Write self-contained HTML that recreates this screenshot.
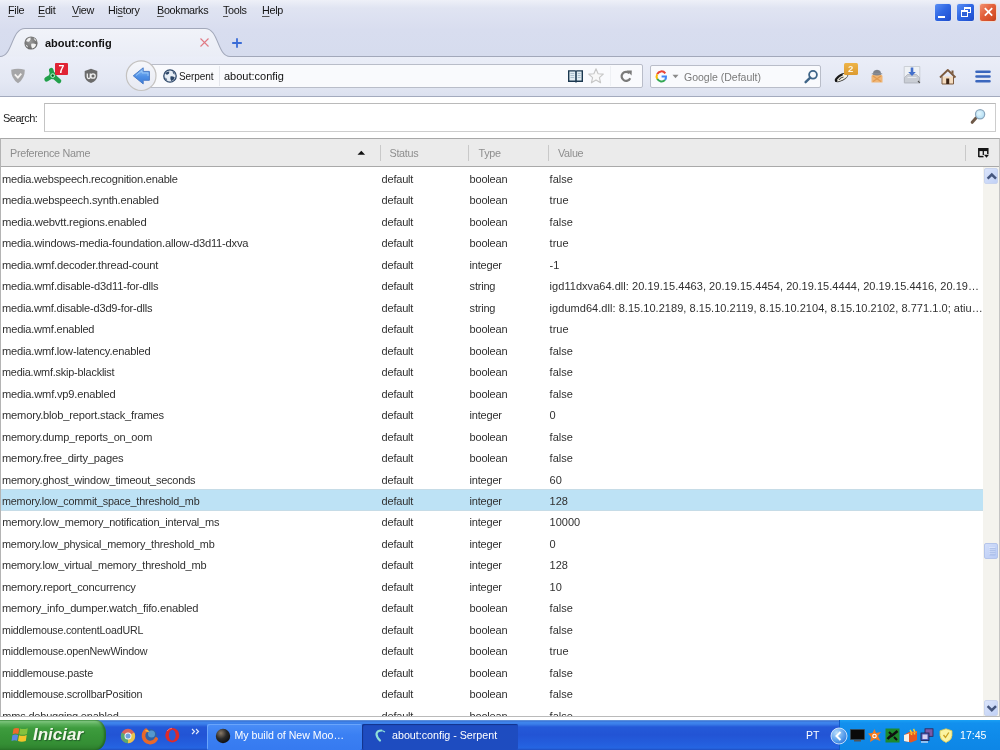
<!DOCTYPE html>
<html><head><meta charset="utf-8">
<style>
*{margin:0;padding:0;box-sizing:border-box}
html,body{width:1000px;height:750px;overflow:hidden;background:#fff;font-family:"Liberation Sans",sans-serif}
.abs{position:absolute}
svg{position:absolute;overflow:visible}
#chrome{position:absolute;left:0;top:0;width:1000px;height:97px;background:linear-gradient(#eef0f8 0,#e0e4f2 8px,#d8ddef 30px,#d6dcee 56px)}
.menu{position:absolute;top:3.7px;font-size:10.8px;letter-spacing:-0.3px;color:#141414;white-space:nowrap}
.menu u{text-decoration:underline;text-decoration-color:#555;text-underline-offset:1.5px}
#nav{position:absolute;left:0;top:56px;width:1000px;height:41px;background:linear-gradient(#ebeef8,#e4e8f4 25px,#dce1ef);border-bottom:1px solid #a3aabd}
#url{position:absolute;left:140px;top:64px;width:503px;height:24px;border:1px solid #b9bdc9;border-radius:2px;background:#f9fafd}
#srch{position:absolute;left:650px;top:65px;width:171px;height:23px;border:1px solid #b9bdc9;border-radius:2px;background:#f9fafd}
#tree{position:absolute;left:0;top:138px;width:1000px;height:579px;border:1px solid #a8a8a8;border-left-color:#b4b4b4;border-right-color:#c4c4c4;border-bottom-color:#bababa;background:#fff;overflow:hidden}
#hdr{position:absolute;left:0;top:0;width:998px;height:28px;background:#ebebeb;border-bottom:1px solid #a9a9a9}
.htxt{position:absolute;top:8px;font-size:10.8px;letter-spacing:-0.3px;color:#8e8e8e;white-space:nowrap}
.hsep{position:absolute;top:6px;width:1px;height:16px;background:#c9c9c9}
#body{position:absolute;left:0;top:28px;width:983px;height:549px;overflow:hidden}
.row{position:absolute;left:0;width:983px;height:21.48px;font-size:11px;letter-spacing:-0.2px;color:#303030;white-space:nowrap}
.row span{position:absolute;top:5.8px}
.row.sel{background:#bde2f5;box-shadow:inset 0 1px 0 #c6dce7,inset 0 -1px 0 #c6dce7}
.c1{left:1.3px;transform-origin:0 0}.c2{left:380.6px}.c3{left:468.6px}.c4{left:548.6px;letter-spacing:0}
#sb{position:absolute;left:982px;top:28px;width:16px;height:549px;background:#f4f3ee}
.sbb{position:absolute;left:1px;width:14px;height:16px;border-radius:2px;background:linear-gradient(135deg,#dbe5fb,#c1d1f6);border:1px solid #c9d4ee}
#task{position:absolute;left:0;top:720.3px;width:1000px;height:29.7px;background:linear-gradient(#7aaee8 0,#3a6ccc 1px,#3f86ec 2px,#3b7fea 4px,#2459d8 7px,#2254d5 15px,#2460df 25px,#2565e2 28px,#1f4fc2 30px)}
</style></head><body>
<div id="root" style="position:absolute;left:0;top:0;width:1000px;height:750px;will-change:transform">
<div id="chrome">
 <div class="menu" style="left:8px"><u>F</u>ile</div>
 <div class="menu" style="left:38px"><u>E</u>dit</div>
 <div class="menu" style="left:72px"><u>V</u>iew</div>
 <div class="menu" style="left:108px">Hi<u>s</u>tory</div>
 <div class="menu" style="left:157px"><u>B</u>ookmarks</div>
 <div class="menu" style="left:223px"><u>T</u>ools</div>
 <div class="menu" style="left:262px"><u>H</u>elp</div>
 <!-- window controls -->
 <div class="abs" style="left:934px;top:3px;width:18px;height:18.5px;border-radius:3px;background:linear-gradient(135deg,#5a8ef4,#3068e4 45%,#2456d6 80%,#1f4bc4);border:1px solid #dfe6f6"><div class="abs" style="left:3px;top:11.5px;width:6.5px;height:2.3px;background:#fff"></div></div>
 <div class="abs" style="left:956px;top:3px;width:18.5px;height:18.5px;border-radius:3px;background:linear-gradient(135deg,#5a8ef4,#3068e4 45%,#2456d6 80%,#1f4bc4);border:1px solid #dfe6f6"><div class="abs" style="left:6.5px;top:3px;width:7px;height:6px;border:1.3px solid #fff;border-top-width:2px"></div><div class="abs" style="left:3.5px;top:6px;width:7px;height:7px;border:1.3px solid #fff;border-top-width:2px;background:#2f62d8"></div></div>
 <div class="abs" style="left:978.5px;top:3px;width:18.5px;height:18.5px;border-radius:3px;background:linear-gradient(135deg,#f29070,#e2603a 45%,#d44d26 80%,#c03e1c);border:1px solid #efdcd4"><svg width="19" height="18" style="left:-1px;top:-1px"><path d="M5.8 5.2 L13.2 12.6 M13.2 5.2 L5.8 12.6" stroke="#fff" stroke-width="1.7"/></svg></div>
</div>
<div id="nav"></div>
<div id="url"></div>
<div id="srch"></div>
<div id="tabs">
 <svg width="1000" height="32" style="left:0;top:26px">
  <defs><linearGradient id="tg" x1="0" y1="0" x2="0" y2="1"><stop offset="0" stop-color="#f1f3f9"/><stop offset="1" stop-color="#eaedf6"/></linearGradient></defs>
  <path d="M0,30.5 C13,30.5 11,2.5 25,2.5 L205,2.5 C219,2.5 217,30.5 230,30.5 Z" fill="url(#tg)"/>
  <path d="M-1,30.5 H0 C13,30.5 11,2.5 25,2.5 L205,2.5 C219,2.5 217,30.5 230,30.5 H1001" fill="none" stroke="#a2a8ba" stroke-width="1.1"/>
 </svg>
 <svg width="14" height="14" style="left:24px;top:36px"><defs><radialGradient id="gl" cx="0.45" cy="0.4" r="0.7"><stop offset="0" stop-color="#9a9a9a"/><stop offset="1" stop-color="#5e5e5e"/></radialGradient></defs><circle cx="7" cy="7" r="6.6" fill="url(#gl)"/><path d="M2 5 Q3.5 1.8 6.5 1.5 Q7.2 3.5 5.5 5.2 Q4 6.5 2 5Z M7.2 7.8 Q10 7 12.2 8.5 Q11.2 12 8 12.6 Q6.8 10 7.2 7.8Z M9.5 1.8 Q12 3 12.6 5.6 Q10.5 5.2 9.5 1.8Z M1.6 8.5 Q3.5 9 4.2 11.5 Q2.3 10.8 1.6 8.5Z" fill="#f2f2f2"/></svg>
 <div class="abs" style="left:45px;top:36.5px;font-size:11px;font-weight:bold;color:#111;white-space:nowrap">about:config</div>
 <svg width="12" height="12" style="left:199px;top:37px"><path d="M1.5 1.5 L9.5 9.5 M9.5 1.5 L1.5 9.5" stroke="#e07a84" stroke-width="1.1"/></svg>
 <svg width="12" height="12" style="left:231px;top:37px"><path d="M6 1.2 V10.8 M1.2 6 H10.8" stroke="#3a6cd6" stroke-width="1.8"/></svg>
</div>
<div id="navicons">
 <!-- gray shield -->
 <svg width="16" height="17" style="left:10px;top:68px"><path d="M1.2 1.8 Q8 -0.3 14.8 1.8 Q15 10.5 8 15.3 Q1 10.5 1.2 1.8 Z" fill="#a6a6a8"/><path d="M4.8 6.3 L7.9 9.6 L11.3 5.6" fill="none" stroke="#f4f2f0" stroke-width="1.8"/></svg>
 <!-- green tri-lobe -->
 <svg width="18" height="18" style="left:44px;top:67px"><path d="M8.7 8.6 L7.2 3.2 M8.7 8.6 L2.6 12.3 M8.7 8.6 L15 14" stroke="#21a04a" stroke-width="4.6" stroke-linecap="round"/><circle cx="8.7" cy="8.6" r="3.6" fill="#21a04a"/><circle cx="8.7" cy="8.6" r="1.9" fill="none" stroke="#c8f5d4" stroke-width="0.9"/><circle cx="8.7" cy="8.6" r="0.9" fill="#0c4f20"/></svg>
 <div class="abs" style="left:55px;top:63px;width:13px;height:12px;background:#e02334;border-radius:1px;color:#fff;font:bold 10.5px 'Liberation Sans';text-align:center;line-height:12px">7</div>
 <!-- ublock -->
 <svg width="16" height="16" style="left:83px;top:68px"><path d="M8 0.8 L14.3 3 V8 Q14.3 12.5 8 15 Q1.7 12.5 1.7 8 V3 Z" fill="#6b6b6b"/><path d="M4.3 5.5 V9 Q4.3 10.5 5.8 10.5 Q7.3 10.5 7.3 9 V5.5" fill="none" stroke="#f0f0f0" stroke-width="1.3"/><circle cx="10" cy="8" r="2.2" fill="none" stroke="#f0f0f0" stroke-width="1.3"/></svg>
 <!-- back button -->
 <svg width="34" height="34" style="left:124px;top:59px"><defs><linearGradient id="bb" x1="0" y1="0" x2="0" y2="1"><stop offset="0" stop-color="#f6f7fb"/><stop offset="1" stop-color="#e6e9f2"/></linearGradient><linearGradient id="ba" x1="0" y1="0" x2="0" y2="1"><stop offset="0" stop-color="#8fc2f8"/><stop offset="0.55" stop-color="#4f90e6"/><stop offset="1" stop-color="#3a7ad8"/></linearGradient></defs>
  <circle cx="17.2" cy="16.7" r="14.8" fill="url(#bb)" stroke="#c4c2c0" stroke-width="1.2"/>
  <path d="M9.3 16.8 L19.2 8.8 V12.4 H25.4 V21.3 H19.2 V24.9 Z" fill="url(#ba)" stroke="#4a7cc8" stroke-width="1" stroke-linejoin="round"/><path d="M12 16.5 L18 11.8 V14 H24 V17" fill="none" stroke="#b9dcfb" stroke-width="0.8" opacity="0.7"/></svg>
</div>

<div id="urlc">
 <svg width="14" height="14" style="left:163px;top:69px"><circle cx="7" cy="7" r="6.2" fill="#e6edf5" stroke="#2c4668" stroke-width="1.3"/><path d="M2.2 4.2 Q4 2.2 6.3 2.4 Q6.6 4.6 4.6 5.6 Q3 6 2.2 4.2Z M7.4 7.4 Q9.8 7 11.8 8.6 Q11 11.6 8.2 12 Q7 9.8 7.4 7.4Z M9.2 2.2 Q11.4 3.2 12 5.4 Q10.2 5.2 9.2 2.2Z M2 8.6 Q3.8 9.2 4.4 11.6 Q2.6 10.8 2 8.6Z" fill="#2c4668"/></svg>
 <div class="abs" style="left:179px;top:70.5px;font-size:10px;letter-spacing:-0.1px;color:#1a1a1a;white-space:nowrap">Serpent</div>
 <div class="abs" style="left:219px;top:66px;width:1px;height:20px;background:#e4e6ec"></div>
 <div class="abs" style="left:224px;top:70px;font-size:11px;color:#111;white-space:nowrap">about:config</div>
 <!-- reader book -->
 <svg width="18" height="16" style="left:567px;top:68px"><path d="M1 2.2 H8.5 L9 2.8 L9.5 2.2 H16 V14 H10 L9 14.8 L8 14 H1 Z" fill="#1b3850"/><path d="M2.4 3.4 H8.2 V12.4 H2.4 Z M9.8 3.4 H14.6 V12.4 H9.8 Z" fill="#e2edf3"/><path d="M3.4 5.5 H7.2 M3.4 7.5 H7.2 M3.4 9.5 H7.2 M10.8 5.5 H13.6 M10.8 7.5 H13.6 M10.8 9.5 H13.6" stroke="#9db4c4" stroke-width="0.8"/></svg>
 <!-- star -->
 <svg width="18" height="18" style="left:587px;top:67px"><path d="M9 1.8 L11.1 6.7 L16.3 7.1 L12.4 10.6 L13.6 15.8 L9 13 L4.4 15.8 L5.6 10.6 L1.7 7.1 L6.9 6.7 Z" fill="#f8f8f8" stroke="#c6c6c6" stroke-width="1.1" stroke-linejoin="round"/></svg>
 <div class="abs" style="left:610px;top:66px;width:1px;height:20px;background:#eef0f4"></div>
 <!-- reload -->
 <svg width="14" height="14" style="left:619px;top:69px"><path d="M10.4 4.2 A4.5 4.5 0 1 0 11.2 9.2" fill="none" stroke="#7a7a7a" stroke-width="2.2"/><path d="M7.6 1.6 L12.8 1.4 L12.6 6.6 Z" fill="#7a7a7a"/></svg>
 <!-- google G -->
 <svg width="13" height="13" style="left:654.5px;top:69.5px"><path d="M10.3 3.3 A4.7 4.7 0 0 0 2.2 4.2" fill="none" stroke="#ea4335" stroke-width="2"/><path d="M2.2 4.2 A4.7 4.7 0 0 0 2.3 8.9" fill="none" stroke="#fbbc05" stroke-width="2"/><path d="M2.3 8.9 A4.7 4.7 0 0 0 10 9.9" fill="none" stroke="#34a853" stroke-width="2"/><path d="M10 9.9 A4.7 4.7 0 0 0 11 6.4 H6.6" fill="none" stroke="#4285f4" stroke-width="2"/></svg>
 <svg width="8" height="6" style="left:671.5px;top:74px"><path d="M0.5 0.8 H6.5 L3.5 4.2 Z" fill="#8a8a8a"/></svg>
 <div class="abs" style="left:684px;top:70.5px;font-size:10.5px;color:#7a7a7a;white-space:nowrap">Google (Default)</div>
 <!-- magnifier -->
 <svg width="15" height="15" style="left:804px;top:69px"><circle cx="9" cy="5.8" r="3.9" fill="none" stroke="#3f6588" stroke-width="1.8"/><path d="M6.2 8.6 L1.6 13.2" stroke="#3f6588" stroke-width="2.4" stroke-linecap="round"/></svg>
</div>
<div id="navright">
 <!-- pen -->
 <svg width="18" height="16" style="left:833px;top:68px"><g transform="rotate(-28 8.5 9.5)"><ellipse cx="8.5" cy="9.5" rx="7" ry="3" fill="#f3f0e4" stroke="#3a3a3a" stroke-width="0.9"/><path d="M2 9 Q6 6.5 11 7.2" stroke="#1a1a1a" stroke-width="1.8" fill="none"/><path d="M5 10.5 Q8 9 10.5 10" stroke="#444" stroke-width="1" fill="none"/><circle cx="2.3" cy="9.8" r="1.3" fill="#111"/></g></svg>
 <div class="abs" style="left:844px;top:63px;width:13.5px;height:12px;background:linear-gradient(#eeb448,#dc9a30);border-radius:1.5px;color:#fdf4e0;font:bold 9.5px 'Liberation Sans';text-align:center;line-height:12px">2</div>
 <!-- person -->
 <svg width="14" height="16" style="left:869.5px;top:68px"><path d="M1.5 8 Q1.5 6.5 4 6.5 H10 Q12.5 6.5 12.5 8 V14.5 H1.5 Z" fill="#f0b676"/><path d="M3 8 L11 13.5 M11 8 L3 13.5" stroke="#e09a50" stroke-width="1.3"/><path d="M3 6.8 Q2.5 2 7 1.8 Q11.5 2 11 6.8 Q7 8.2 3 6.8Z" fill="#7e828a"/><path d="M1.8 5.8 H12.2" stroke="#8e929a" stroke-width="1"/></svg>
 <!-- download tray -->
 <svg width="18" height="19" style="left:903px;top:65px"><path d="M1.2 1.5 H16.8 V18 H1.2 Z" fill="#eef1f5" stroke="#c4c8ce" stroke-width="0.8"/><path d="M1.5 12.5 L4.5 9.5 H13.5 L16.5 12.5 V17.8 H1.5 Z" fill="#c9cdd4" stroke="#a9aeb6" stroke-width="0.7"/><path d="M4.5 12.5 H13.5" stroke="#e8ebef" stroke-width="1"/><path d="M7.7 2.5 H10.3 V7 H12.8 L9 11 L5.2 7 H7.7 Z" fill="#4470cc"/><path d="M15 16 L16.8 17.8" stroke="#555" stroke-width="1.2"/></svg>
 <!-- home -->
 <svg width="18" height="17" style="left:939px;top:67.5px"><path d="M3 8.5 V16 H14.5 V8.5" fill="#f4dcc0" stroke="#7c5a3e" stroke-width="1"/><path d="M1 9.5 L8.8 2 L16.5 9.5" fill="none" stroke="#7c5a3e" stroke-width="1.8" stroke-linejoin="round"/><path d="M12.5 2.5 H14.5 V6.5 L12.5 4.5 Z" fill="#7c5a3e"/><rect x="7.2" y="10.5" width="3" height="5.5" fill="#3e2616"/></svg>
 <!-- hamburger -->
 <svg width="17" height="14" style="left:974.5px;top:69.5px"><path d="M1.5 1.8 H14.5 M1.5 6.5 H14.5 M1.5 11.2 H14.5" stroke="#3a66bd" stroke-width="2.6" stroke-linecap="round"/></svg>
</div>
<div id="search-row">
 <div class="abs" style="left:3px;top:111.5px;font-size:11px;letter-spacing:-0.5px;color:#222;white-space:nowrap">Sea<u>r</u>ch:</div>
 <div class="abs" style="left:44px;top:103px;width:952px;height:29px;border:1px solid #cdcdcd;border-top-color:#bababa;border-left-color:#c4c4c4;background:#fff"></div>
 <svg width="18" height="18" style="left:969px;top:107px"><defs><radialGradient id="mg" cx="0.4" cy="0.4" r="0.7"><stop offset="0" stop-color="#e6f7fd"/><stop offset="1" stop-color="#a9d9f2"/></radialGradient></defs><path d="M7.2 10.8 L3.2 15.3" stroke="#6e5948" stroke-width="3" stroke-linecap="round"/><circle cx="11.1" cy="7.3" r="4.6" fill="url(#mg)" stroke="#8aa5bc" stroke-width="1.2"/></svg>
</div>
<div id="tree">
 <div id="hdr">
  <div class="htxt" style="left:9px">Preference Name</div>
  <div class="hsep" style="left:379px"></div>
  <div class="htxt" style="left:388.5px">Status</div>
  <div class="hsep" style="left:467px"></div>
  <div class="htxt" style="left:477.5px">Type</div>
  <div class="hsep" style="left:547px"></div>
  <div class="htxt" style="left:557px">Value</div>
  <div class="hsep" style="left:964px"></div>
  <svg width="10" height="6" style="left:356px;top:11.3px"><path d="M0.5 4.8 L4.3 0.8 L8.1 4.8 Z" fill="#111"/></svg>
  <svg width="13" height="12" style="left:976px;top:8px"><path d="M1.8 10 V1.8 H10.8 V7" fill="none" stroke="#151515" stroke-width="1.5"/><path d="M1.8 3 H10.8" stroke="#151515" stroke-width="2.2"/><path d="M6.3 3 V8" stroke="#151515" stroke-width="1.3"/><path d="M1.8 9.6 H6.5" stroke="#151515" stroke-width="1.5"/><path d="M7 7.8 H12 L9.5 10.8 Z" fill="#111"/></svg>
 </div>
 <div id="body">
<div class="row" style="top:0.00px"><span class="c1" style="transform:scaleX(1.0057)">media.webspeech.recognition.enable</span><span class="c2">default</span><span class="c3">boolean</span><span class="c4">false</span></div>
<div class="row" style="top:21.48px"><span class="c1" style="transform:scaleX(1.0156)">media.webspeech.synth.enabled</span><span class="c2">default</span><span class="c3">boolean</span><span class="c4">true</span></div>
<div class="row" style="top:42.96px"><span class="c1" style="transform:scaleX(1.0284)">media.webvtt.regions.enabled</span><span class="c2">default</span><span class="c3">boolean</span><span class="c4">false</span></div>
<div class="row" style="top:64.44px"><span class="c1" style="transform:scaleX(1.0140)">media.windows-media-foundation.allow-d3d11-dxva</span><span class="c2">default</span><span class="c3">boolean</span><span class="c4">true</span></div>
<div class="row" style="top:85.92px"><span class="c1" style="transform:scaleX(1.0129)">media.wmf.decoder.thread-count</span><span class="c2">default</span><span class="c3">integer</span><span class="c4">-1</span></div>
<div class="row" style="top:107.40px"><span class="c1" style="transform:scaleX(1.0103)">media.wmf.disable-d3d11-for-dlls</span><span class="c2">default</span><span class="c3">string</span><span class="c4" style="letter-spacing:0.04px">igd11dxva64.dll: 20.19.15.4463, 20.19.15.4454, 20.19.15.4444, 20.19.15.4416, 20.19…</span></div>
<div class="row" style="top:128.88px"><span class="c1" style="transform:scaleX(1.0040)">media.wmf.disable-d3d9-for-dlls</span><span class="c2">default</span><span class="c3">string</span><span class="c4" style="letter-spacing:0.04px">igdumd64.dll: 8.15.10.2189, 8.15.10.2119, 8.15.10.2104, 8.15.10.2102, 8.771.1.0; atiu…</span></div>
<div class="row" style="top:150.36px"><span class="c1" style="transform:scaleX(1.0000)">media.wmf.enabled</span><span class="c2">default</span><span class="c3">boolean</span><span class="c4">true</span></div>
<div class="row" style="top:171.84px"><span class="c1" style="transform:scaleX(1.0109)">media.wmf.low-latency.enabled</span><span class="c2">default</span><span class="c3">boolean</span><span class="c4">false</span></div>
<div class="row" style="top:193.32px"><span class="c1" style="transform:scaleX(0.9877)">media.wmf.skip-blacklist</span><span class="c2">default</span><span class="c3">boolean</span><span class="c4">false</span></div>
<div class="row" style="top:214.80px"><span class="c1" style="transform:scaleX(1.0125)">media.wmf.vp9.enabled</span><span class="c2">default</span><span class="c3">boolean</span><span class="c4">false</span></div>
<div class="row" style="top:236.28px"><span class="c1" style="transform:scaleX(1.0125)">memory.blob_report.stack_frames</span><span class="c2">default</span><span class="c3">integer</span><span class="c4">0</span></div>
<div class="row" style="top:257.76px"><span class="c1" style="transform:scaleX(0.9973)">memory.dump_reports_on_oom</span><span class="c2">default</span><span class="c3">boolean</span><span class="c4">false</span></div>
<div class="row" style="top:279.24px"><span class="c1" style="transform:scaleX(1.0167)">memory.free_dirty_pages</span><span class="c2">default</span><span class="c3">boolean</span><span class="c4">false</span></div>
<div class="row" style="top:300.72px"><span class="c1" style="transform:scaleX(0.9969)">memory.ghost_window_timeout_seconds</span><span class="c2">default</span><span class="c3">integer</span><span class="c4">60</span></div>
<div class="row sel" style="top:322.20px"><span class="c1" style="transform:scaleX(0.9821)">memory.low_commit_space_threshold_mb</span><span class="c2">default</span><span class="c3">integer</span><span class="c4">128</span></div>
<div class="row" style="top:343.68px"><span class="c1" style="transform:scaleX(1.0000)">memory.low_memory_notification_interval_ms</span><span class="c2">default</span><span class="c3">integer</span><span class="c4">10000</span></div>
<div class="row" style="top:365.16px"><span class="c1" style="transform:scaleX(0.9879)">memory.low_physical_memory_threshold_mb</span><span class="c2">default</span><span class="c3">integer</span><span class="c4">0</span></div>
<div class="row" style="top:386.64px"><span class="c1" style="transform:scaleX(0.9971)">memory.low_virtual_memory_threshold_mb</span><span class="c2">default</span><span class="c3">integer</span><span class="c4">128</span></div>
<div class="row" style="top:408.12px"><span class="c1" style="transform:scaleX(1.0152)">memory.report_concurrency</span><span class="c2">default</span><span class="c3">integer</span><span class="c4">10</span></div>
<div class="row" style="top:429.60px"><span class="c1" style="transform:scaleX(1.0124)">memory_info_dumper.watch_fifo.enabled</span><span class="c2">default</span><span class="c3">boolean</span><span class="c4">false</span></div>
<div class="row" style="top:451.08px"><span class="c1" style="transform:scaleX(0.9684)">middlemouse.contentLoadURL</span><span class="c2">default</span><span class="c3">boolean</span><span class="c4">false</span></div>
<div class="row" style="top:472.56px"><span class="c1" style="transform:scaleX(0.9753)">middlemouse.openNewWindow</span><span class="c2">default</span><span class="c3">boolean</span><span class="c4">true</span></div>
<div class="row" style="top:494.04px"><span class="c1" style="transform:scaleX(0.9891)">middlemouse.paste</span><span class="c2">default</span><span class="c3">boolean</span><span class="c4">false</span></div>
<div class="row" style="top:515.52px"><span class="c1" style="transform:scaleX(0.9790)">middlemouse.scrollbarPosition</span><span class="c2">default</span><span class="c3">boolean</span><span class="c4">false</span></div>
<div class="row" style="top:537.00px"><span class="c1">mms.debugging.enabled</span><span class="c2">default</span><span class="c3">boolean</span><span class="c4">false</span></div>
 </div>
 <div id="sb">
  <div class="sbb" style="top:1px"><svg width="14" height="16" style="left:0;top:0"><path d="M2.6 9.6 L6.8 5.6 L11 9.6" fill="none" stroke="#44567e" stroke-width="2.5"/></svg></div>
  <div class="sbb" style="top:376px;height:15.5px;background:linear-gradient(135deg,#d2defa,#b9cbf5);border-color:#b4c4ea"><svg width="14" height="16" style="left:0;top:0"><path d="M4 4 H10 M4 6 H10 M4 8 H10 M4 10 H10" stroke="#eef3fe" stroke-width="0.9"/><path d="M4.5 4.8 H10.5 M4.5 6.8 H10.5 M4.5 8.8 H10.5 M4.5 10.8 H10.5" stroke="#8aa3dc" stroke-width="0.7"/></svg></div>
  <div class="sbb" style="top:533px"><svg width="14" height="16" style="left:0;top:0"><path d="M2.6 5.2 L6.8 9.2 L11 5.2" fill="none" stroke="#44567e" stroke-width="2.5"/></svg></div>
 </div>
</div>
<div id="task">
 <div class="abs" style="left:0;top:0;width:106px;height:29.5px;border-radius:0 10px 10px 0/0 14px 14px 0;background:linear-gradient(#4a9f4a 0,#7cc57c 1.5px,#5cb05c 4px,#3e9c3e 8px,#389638 50%,#348e34 80%,#2c7c2c 100%);box-shadow:inset -2px 0 2px rgba(20,70,20,0.5)"></div>
 <svg width="19" height="18" style="left:10.5px;top:6px"><path d="M2.5 2.8 Q5 1.2 8.3 2.4 L7.3 8 Q4.3 6.9 1.6 8.3Z" fill="#ee6a2c"/><path d="M9.2 2.6 Q12.5 3.8 16.8 2.2 L15.9 8 Q12 9.6 8.2 8.2Z" fill="#86c23e"/><path d="M1.4 9.3 Q4.2 7.9 7.1 9 L6.1 14.8 Q3.5 13.6 0.5 15Z" fill="#5a86e6"/><path d="M8 9.2 Q11.8 10.6 15.7 9 L14.8 14.9 Q11 16.4 7 15Z" fill="#f4c42a"/></svg>
 <div class="abs" style="left:33px;top:4.8px;font:italic bold 17px 'Liberation Sans';color:#f2f8ea;text-shadow:1px 1px 1px #24602a;white-space:nowrap">Iniciar</div>
 <!-- quick launch -->
 <svg width="16" height="16" style="left:119.5px;top:7.5px"><circle cx="8" cy="8" r="7.2" fill="#d9645a"/><path d="M8 8 L1.8 4.4 A7.2 7.2 0 0 0 8 15.2 Z" fill="#5aa870"/><path d="M8 8 L8 15.2 A7.2 7.2 0 0 0 14.2 4.4 Z" fill="#e8c64e"/><circle cx="8" cy="8" r="3.5" fill="#eef4f8"/><circle cx="8" cy="8" r="2.5" fill="#6f9fdc"/></svg>
 <svg width="16" height="16" style="left:141.5px;top:7.5px"><circle cx="8" cy="8" r="7" fill="#2f62a8"/><circle cx="9.5" cy="6" r="3.5" fill="#5fa6d6" opacity="0.8"/><path d="M4 2.2 Q1 5 1.6 9 Q2.6 13.5 7.5 14.6 Q12 15 14.2 11" fill="none" stroke="#e8682a" stroke-width="3.6" stroke-linecap="round"/><path d="M3.5 3 Q5.5 2 6.5 4" fill="none" stroke="#f5b040" stroke-width="1.6"/></svg>
 <svg width="17" height="17" style="left:163.5px;top:7px"><ellipse cx="8.3" cy="8.2" rx="7" ry="7.3" fill="#de2a2a"/><ellipse cx="8.3" cy="8.2" rx="3.4" ry="5.4" fill="#2a5cd6"/><path d="M3 4 Q5 1.5 8 1.2" fill="none" stroke="#f07070" stroke-width="1"/></svg>
 <svg width="10" height="8" style="left:191px;top:7.5px"><path d="M1 1 L3.5 3.5 L1 6 M5 1 L7.5 3.5 L5 6" fill="none" stroke="#dfe8fa" stroke-width="1.2"/></svg>
 <!-- task buttons -->
 <div class="abs" style="left:206.5px;top:4px;width:155px;height:26px;border-radius:2px;background:linear-gradient(#4b8ef7,#3b80f3 40%,#367af0);box-shadow:inset 1px 1px 0 #6aa5fb"></div>
 <svg width="16" height="16" style="left:215px;top:8px"><defs><radialGradient id="tb1" cx="0.35" cy="0.3" r="0.8"><stop offset="0" stop-color="#8a7a68"/><stop offset="0.5" stop-color="#2a2a2a"/><stop offset="1" stop-color="#0a0a0a"/></radialGradient></defs><circle cx="8" cy="8" r="7.2" fill="url(#tb1)"/></svg>
 <div class="abs" style="left:234.5px;top:9px;font-size:10.6px;color:#fff;white-space:nowrap">My build of New Moo…</div>
 <div class="abs" style="left:362px;top:4px;width:156px;height:26px;border-radius:2px;background:#1e4cc0;box-shadow:inset 1px 1px 1px #12338a"></div>
 <svg width="16" height="16" style="left:372px;top:8px"><path d="M9.5 2.5 Q5 2.5 4.5 6 Q4.5 9 8 12.5" fill="none" stroke="#8fe0d8" stroke-width="2.2" stroke-linecap="round"/><path d="M10.5 2.8 L13 4" stroke="#8fe0d8" stroke-width="1.2"/></svg>
 <div class="abs" style="left:392px;top:9px;font-size:10.7px;color:#fff;white-space:nowrap">about:config - Serpent</div>
 <div class="abs" style="left:806px;top:9px;font-size:10.5px;color:#fff;white-space:nowrap">PT</div>
 <!-- tray -->
 <div class="abs" style="left:839px;top:0;width:161px;height:30px;background:linear-gradient(#1aa0f4 0,#1290ee 3px,#0f8bea 50%,#0d86e6);border-left:1px solid #0f5cc8"></div>
 <svg width="18" height="18" style="left:830px;top:6.5px"><defs><radialGradient id="chv" cx="0.35" cy="0.3" r="0.8"><stop offset="0" stop-color="#b8dcfc"/><stop offset="0.6" stop-color="#5aa0ec"/><stop offset="1" stop-color="#2a72d8"/></radialGradient></defs><circle cx="9" cy="9" r="8" fill="url(#chv)" stroke="#e8f2ff" stroke-width="0.8"/><path d="M10.5 5 L6.5 9 L10.5 13" fill="none" stroke="#fff" stroke-width="2"/></svg>
 <svg width="15" height="13" style="left:850px;top:9px"><rect x="0.5" y="0.5" width="14" height="10" fill="#0a0a0a" stroke="#4a4a4a" stroke-width="0.6"/><rect x="4" y="11" width="7" height="1.5" fill="#555"/></svg>
 <svg width="15" height="15" style="left:867px;top:8px"><path d="M7.5 1 L9 5 L14 4 L11 8 L13.5 13 L8 11 L3 14 L4 9 L1 5.5 L5.5 5 Z" fill="#f47a1f"/><circle cx="7.5" cy="8" r="2.3" fill="#fff"/><circle cx="7.5" cy="8" r="1.2" fill="#f47a1f"/></svg>
 <svg width="15" height="15" style="left:885px;top:7.5px"><rect x="0.5" y="0.5" width="14" height="14" fill="#1d8a2e"/><path d="M2.5 11 Q5 8 7 7.5 Q9 6 12.5 3" stroke="#101010" stroke-width="2.6" fill="none"/><path d="M4 4 L6.5 6.5 M9 9 L12 12" stroke="#101010" stroke-width="2" fill="none"/></svg>
 <svg width="15" height="15" style="left:902.5px;top:7.5px"><path d="M1 7 L6 4 L14 3 V12 L8 14.5 L1 13 Z" fill="#e8561e"/><path d="M1 7 L6 5.5 V14 L1 13 Z" fill="#f6f0e6"/><path d="M7 2 Q9 4 8.5 7 M10.5 1 Q12.5 3.5 11.5 6.5" stroke="#f8d030" stroke-width="1.6" fill="none"/><path d="M6 5.5 L14 4" stroke="#f09a30" stroke-width="1.2"/></svg>
 <svg width="14" height="15" style="left:919.5px;top:7.5px"><rect x="5" y="0.8" width="8" height="7.5" fill="#7a5aa8" stroke="#2a2050" stroke-width="0.8"/><rect x="1" y="5" width="8" height="7.5" fill="#4a5ab8" stroke="#20204a" stroke-width="0.8"/><rect x="2.5" y="6.5" width="5" height="4.5" fill="#d8d0f0"/><path d="M1 14 H8" stroke="#e8e8f8" stroke-width="1.2"/></svg>
 <svg width="14" height="15" style="left:938.5px;top:7.5px"><path d="M7 0.8 L13 2.8 V7.5 Q13 12 7 14.5 Q1 12 1 7.5 V2.8 Z" fill="#fbf3a0" stroke="#d8c650" stroke-width="0.8"/><path d="M4.5 7 L6.5 9.5 L9.8 4.5" fill="none" stroke="#c8a020" stroke-width="1.3"/></svg>
 <div class="abs" style="left:960px;top:9px;font-size:10.6px;color:#fff;white-space:nowrap">17:45</div>
</div>
</div>
</body></html>
